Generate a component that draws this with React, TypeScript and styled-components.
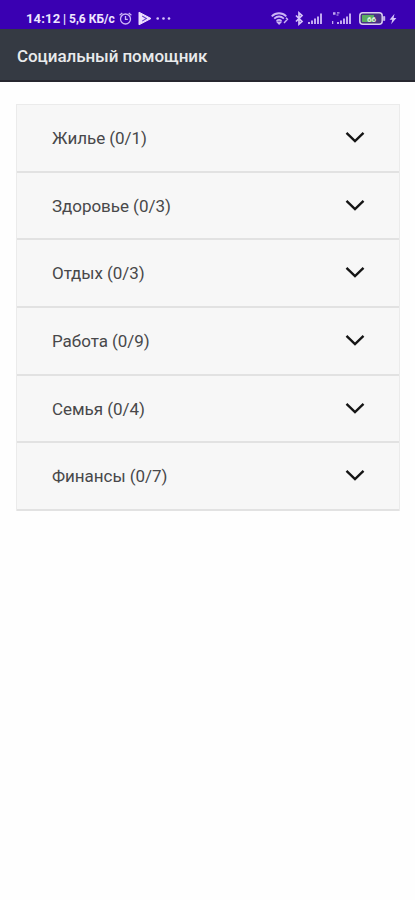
import React from "react";
import styled, { createGlobalStyle } from "styled-components";

const GlobalStyle = createGlobalStyle`
  * { box-sizing: border-box; }
  body { margin: 0; background: #fff; font-family: Roboto, "Noto Sans", sans-serif; }
`;

const Screen = styled.div`
  min-height: 900px;
  background: #fefefe;
`;

const StatusBar = styled.div`
  display: flex;
  justify-content: space-between;
  height: 29px;
  padding: 8px 18px 0 26px;
  background: #3a00b2;
  color: #eee6ff;
`;

const StatusGroup = styled.div`
  display: flex;
  align-items: center;
  height: 21px;
`;

const StatusText = styled.span<{ $size: number; $width: number; $spacing?: number }>`
  width: ${(p) => p.$width}px;
  font-size: ${(p) => p.$size}px;
  font-weight: 700;
  letter-spacing: ${(p) => p.$spacing ?? 0}px;
  white-space: nowrap;
`;

const StatusIcon = styled.svg<{ $gap?: number }>`
  display: block;
  flex: none;
  margin-left: ${(p) => p.$gap ?? 0}px;
  overflow: visible;
`;

const AppBar = styled.header`
  display: flex;
  align-items: center;
  height: 53px;
  padding: 3px 17px 0;
  background: #353a43;
  border-bottom: 2px solid #27272f;
`;

const Title = styled.h1`
  margin: 0;
  color: #e9eaec;
  font-size: 17px;
  font-weight: 500;
  letter-spacing: -0.07px;
  white-space: nowrap;
`;

const Categories = styled.main`
  margin: 22px 15px 0 16px;
  border: 1px solid #ebebeb;
  border-bottom: 0;
  background: #f7f7f7;
`;

const CategoryRow = styled.button`
  display: flex;
  align-items: center;
  justify-content: space-between;
  width: 100%;
  height: 67.7px;
  padding: 0 34px 0 35px;
  border: 0;
  border-bottom: 2px solid #e2e2e2;
  background: transparent;
  font-family: inherit;
`;

const CategoryName = styled.span`
  color: #48484a;
  font-size: 17px;
  font-weight: 400;
  letter-spacing: -0.04px;
  line-height: 20px;
`;

const categories = [
  { name: "Жилье", total: 1 },
  { name: "Здоровье", total: 3 },
  { name: "Отдых", total: 3 },
  { name: "Работа", total: 9 },
  { name: "Семья", total: 4 },
  { name: "Финансы", total: 7 },
];

const Chevron = () => (
  <StatusIcon width="20" height="12" viewBox="0 0 20 12" fill="none">
    <path d="M1.500.800 10 9l8.500-8.200" stroke="#151515" strokeWidth="2.400" />
  </StatusIcon>
);

const AlarmIcon = () => (
  <StatusIcon width="13" height="13" viewBox="0 0 13 13" fill="none" stroke="#cdb5f7" strokeWidth="1.300">
    <circle cx="6.500" cy="7" r="5" />
    <path d="M6.500 4v3.300h2.300M.6 3.200 3.300.9M12.400 3.200 9.700.9" />
  </StatusIcon>
);

const PlayIcon = () => (
  <StatusIcon $gap={6} width="14" height="15" viewBox="0 0 14 15">
    <path d="M1 1.200 13 7.500 1 13.800Z" fill="#eee0ff" stroke="#eee0ff" strokeLinejoin="round" />
    <path d="m4.200 5 4.200 2.500-4.200 2.600" fill="none" stroke="#6540cb" strokeWidth="1.100" />
  </StatusIcon>
);

const MoreIcon = () => (
  <StatusIcon $gap={4} width="15" height="3" viewBox="0 0 15 3" fill="#d8c6fa">
    <circle cx="1.700" cy="1.500" r="1.300" />
    <circle cx="7.500" cy="1.500" r="1.300" />
    <circle cx="13" cy="1.500" r="1.300" />
  </StatusIcon>
);

const WifiIcon = () => (
  <StatusIcon width="18" height="13" viewBox="0 0 18 13" fill="none" stroke="#cbb4f5" strokeWidth="1.800">
    <path d="M.7 4.300C5 .2 11 .2 15.300 4.300M3.200 6.700c3-2.700 6.700-2.700 9.700 0M5.600 9c1.500-1.300 3.400-1.300 4.900 0" />
    <path d="m6.500 10.300 1.600 1.600 1.600-1.600ZM13 11l3.500-3.700-1.500-1.600" strokeWidth="1.400" />
  </StatusIcon>
);

const BluetoothIcon = () => (
  <StatusIcon $gap={6} width="8" height="13" viewBox="0 0 8 13" fill="none" stroke="#d6c3fa" strokeWidth="1.700">
    <path d="m1 3.500 6 6-3 2.700V.8l3 2.700-6 6" />
  </StatusIcon>
);

const SignalIcon = ({ gap, label }: { gap: number; label?: boolean }) => (
  <StatusIcon $gap={gap} width={label ? 20 : 15} height="13" viewBox={label ? "-5 0 20 13" : "0 0 15 13"} fill="#c2a9f1">
    <path d="M0 10h2v2H0zM3 8.500h2V12H3zM6 6.500h2V12H6zM9 4.500h2V12H9zM12 1.500h2V12h-2z" />
    {label && (
      <path d="M-4 .300h2.500v2.400H-4zM0 .300h2.500v1.200H0zM-.5 2.500h2v1h-2zM-5 9h1.300v3H-5z" />
    )}
  </StatusIcon>
);

const BatteryIcon = () => (
  <StatusIcon $gap={7} width="27" height="13" viewBox="0 0 27 13">
    <rect x=".8" y=".8" width="22.400" height="11.400" rx="3" fill="#493086" stroke="#d9cdf1" strokeWidth="1.500" />
    <path d="M3 3h12v7H3z" fill="#5cad62" />
    <path d="M24.500 4.500h1.300v4h-1.300z" fill="#d9cdf1" stroke="#d9cdf1" strokeWidth=".6" />
    <text x="8" y="9.500" fontSize="8" fontWeight="700" fill="#e2f4df">66</text>
  </StatusIcon>
);

const ChargeIcon = () => (
  <StatusIcon $gap={3} width="8" height="12" viewBox="0 0 8 12" fill="#d7c5fa">
    <path d="M5.500.800.600 6.800h2.700l-1.200 4.500 5.300-6.200H4.600Z" />
  </StatusIcon>
);

export default function App() {
  return (
    <Screen>
      <GlobalStyle />
      <StatusBar>
        <StatusGroup>
          <StatusText $size={13} $width={37} $spacing={0.15}>14:12</StatusText>
          <StatusText $size={12} $width={56} $spacing={0}>| 5,6 КБ/с</StatusText>
          <AlarmIcon />
          <PlayIcon />
          <MoreIcon />
        </StatusGroup>
        <StatusGroup>
          <WifiIcon />
          <BluetoothIcon />
          <SignalIcon gap={5} />
          <SignalIcon gap={9} label />
          <BatteryIcon />
          <ChargeIcon />
        </StatusGroup>
      </StatusBar>
      <AppBar>
        <Title>Социальный помощник</Title>
      </AppBar>
      <Categories>
        {categories.map(({ name, total }) => (
          <CategoryRow key={name} type="button" aria-expanded={false}>
            <CategoryName>{`${name} (0/${total})`}</CategoryName>
            <Chevron />
          </CategoryRow>
        ))}
      </Categories>
    </Screen>
  );
}
